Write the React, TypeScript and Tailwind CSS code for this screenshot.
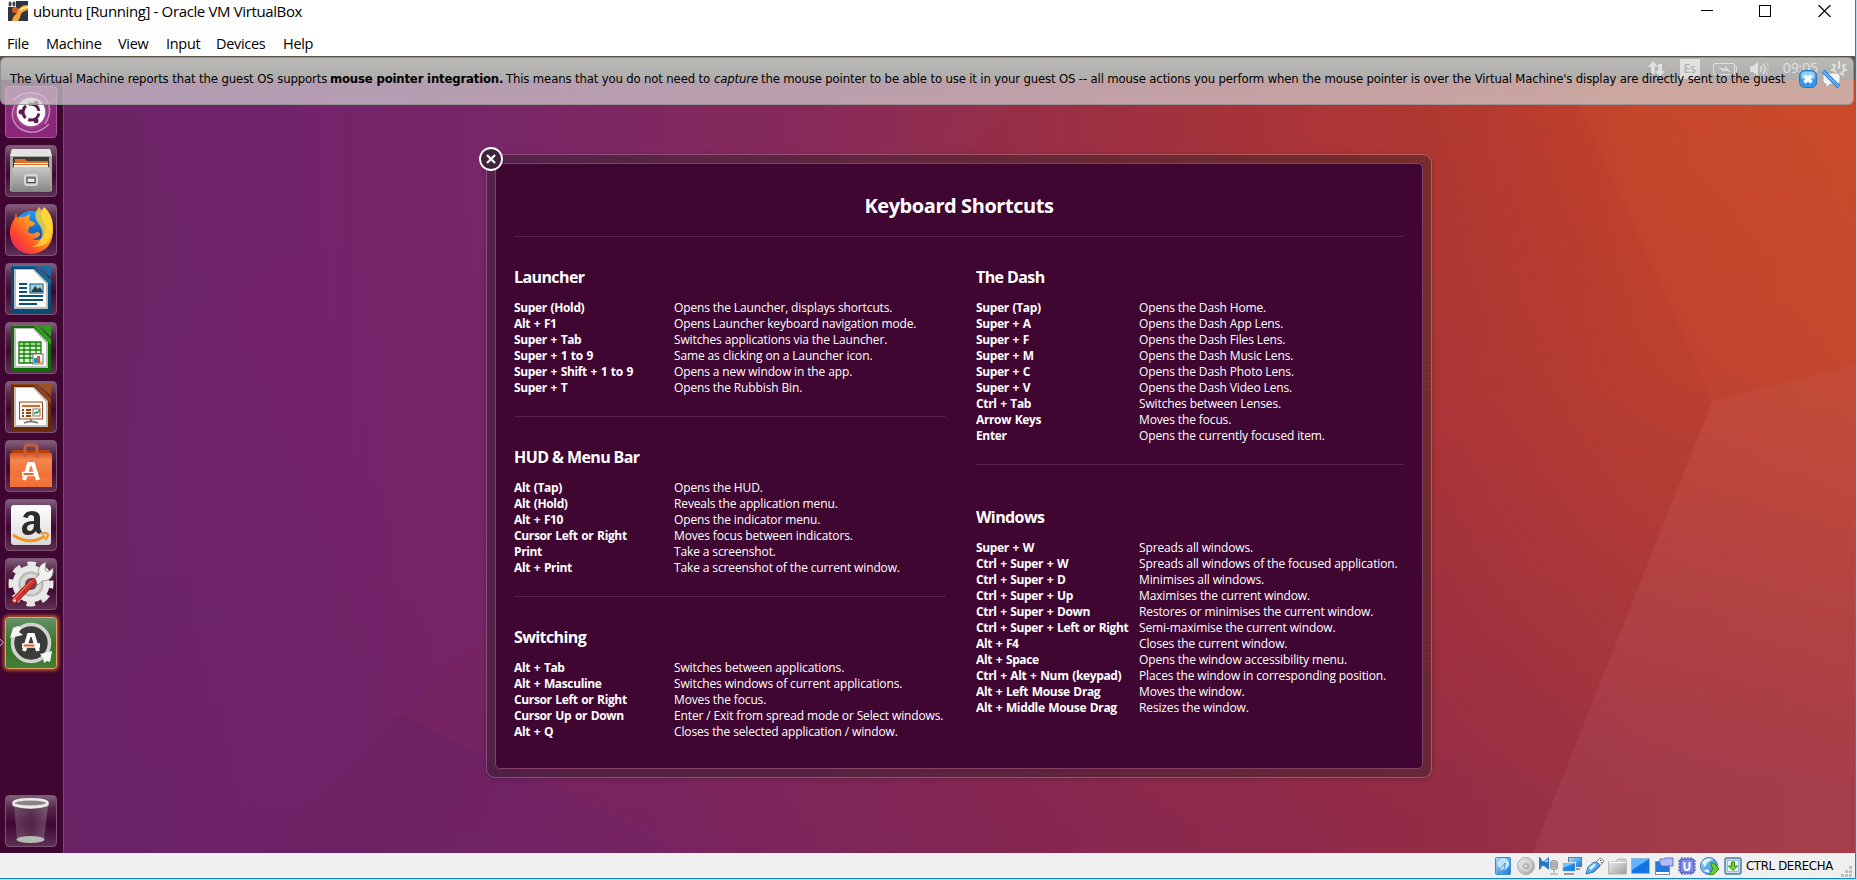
import React from "react";

type Row = [string, string];

const launcherRows: Row[] = [
  ["Super (Hold)", "Opens the Launcher, displays shortcuts."],
  ["Alt + F1", "Opens Launcher keyboard navigation mode."],
  ["Super + Tab", "Switches applications via the Launcher."],
  ["Super + 1 to 9", "Same as clicking on a Launcher icon."],
  ["Super + Shift + 1 to 9", "Opens a new window in the app."],
  ["Super + T", "Opens the Rubbish Bin."],
];
const hudRows: Row[] = [
  ["Alt (Tap)", "Opens the HUD."],
  ["Alt (Hold)", "Reveals the application menu."],
  ["Alt + F10", "Opens the indicator menu."],
  ["Cursor Left or Right", "Moves focus between indicators."],
  ["Print", "Take a screenshot."],
  ["Alt + Print", "Take a screenshot of the current window."],
];
const switchingRows: Row[] = [
  ["Alt + Tab", "Switches between applications."],
  ["Alt + Masculine", "Switches windows of current applications."],
  ["Cursor Left or Right", "Moves the focus."],
  ["Cursor Up or Down", "Enter / Exit from spread mode or Select windows."],
  ["Alt + Q", "Closes the selected application / window."],
];
const dashRows: Row[] = [
  ["Super (Tap)", "Opens the Dash Home."],
  ["Super + A", "Opens the Dash App Lens."],
  ["Super + F", "Opens the Dash Files Lens."],
  ["Super + M", "Opens the Dash Music Lens."],
  ["Super + C", "Opens the Dash Photo Lens."],
  ["Super + V", "Opens the Dash Video Lens."],
  ["Ctrl + Tab", "Switches between Lenses."],
  ["Arrow Keys", "Moves the focus."],
  ["Enter", "Opens the currently focused item."],
];
const windowRows: Row[] = [
  ["Super + W", "Spreads all windows."],
  ["Ctrl + Super + W", "Spreads all windows of the focused application."],
  ["Ctrl + Super + D", "Minimises all windows."],
  ["Ctrl + Super + Up", "Maximises the current window."],
  ["Ctrl + Super + Down", "Restores or minimises the current window."],
  ["Ctrl + Super + Left or Right", "Semi-maximise the current window."],
  ["Alt + F4", "Closes the current window."],
  ["Alt + Space", "Opens the window accessibility menu."],
  ["Ctrl + Alt + Num (keypad)", "Places the window in corresponding position."],
  ["Alt + Left Mouse Drag", "Moves the window."],
  ["Alt + Middle Mouse Drag", "Resizes the window."],
];

function Section({ title, rows, keyWidth }: { title: string; rows: Row[]; keyWidth: string }) {
  return (
    <section className="whitespace-nowrap">
      <h2 className="h-5 text-[16px] leading-[18px] font-bold tracking-[-0.6px]">{title}</h2>
      <div className="mt-3">
        {rows.map(([k, v]) => (
          <div key={k} className="flex h-4 text-[12px] leading-4">
            <span className={`${keyWidth} shrink-0 font-bold tracking-[-0.36px] [word-spacing:0.9px]`}>{k}</span>
            <span className="tracking-[-0.13px]">{v}</span>
          </div>
        ))}
      </div>
    </section>
  );
}

function Rule({ className }: { className: string }) {
  return <div className={`h-px bg-[#571f49] ${className}`} />;
}

function Wallpaper() {
  return (
    <svg className="absolute inset-0 h-full w-full" viewBox="0 56 1857 797" preserveAspectRatio="none">
      <defs>
        <linearGradient id="wp-h" x1="0" x2="1">
          <stop offset="0" stopColor="#6a2464" />
          <stop offset="0.15" stopColor="#70246a" />
          <stop offset="0.27" stopColor="#782765" />
          <stop offset="0.42" stopColor="#862a5a" />
          <stop offset="0.53" stopColor="#942f4c" />
          <stop offset="0.65" stopColor="#a5343f" />
          <stop offset="0.78" stopColor="#b43a33" />
          <stop offset="0.88" stopColor="#c3452c" />
          <stop offset="1" stopColor="#cb4a29" />
        </linearGradient>
        <linearGradient id="wp-v" x1="0.35" y1="0.15" x2="0.5" y2="1">
          <stop offset="0" stopColor="#6e1f6c" stopOpacity="0" />
          <stop offset="0.4" stopColor="#6e1f6c" stopOpacity="0.09" />
          <stop offset="1" stopColor="#6c1f66" stopOpacity="0.44" />
        </linearGradient>
        <linearGradient id="wp-low" x1="0" y1="0" x2="0.8" y2="1">
          <stop offset="0" stopColor="#5a1850" stopOpacity="0.26" />
          <stop offset="1" stopColor="#5a1850" stopOpacity="0.05" />
        </linearGradient>
        <linearGradient id="wp-mid" x1="0" x2="1">
          <stop offset="0" stopColor="#7a2070" stopOpacity="0.22" />
          <stop offset="1" stopColor="#7a2070" stopOpacity="0" />
        </linearGradient>
      </defs>
      <rect y="56" width="1857" height="797" fill="url(#wp-h)" />
      <rect y="56" width="1857" height="797" fill="url(#wp-v)" />
      <polygon points="115,56 400,715 1012,56" fill="url(#wp-mid)" />
      <polygon points="265,853 400,715 690,853" fill="url(#wp-low)" />
      <polygon points="1012,107 1060,56 1565,56 1581,107 1714,401 1534,853 700,853 400,715" fill="#a01818" opacity="0.05" />
      <polygon points="1714,401 1857,365 1857,853 1534,853" fill="#ffb0b0" opacity="0.06" />
      <polygon points="1565,56 1857,56 1857,365 1714,401" fill="#ff7a20" opacity="0.03" />
    </svg>
  );
}

function Tile({ children, className = "border-[#7d5273] bg-[linear-gradient(#835f7b_0px,#56264a_12px,#400632_28px,#47103a_34px,#5e3053_100%)]" }: { children: React.ReactNode; className?: string }) {
  return (
    <div className={`h-[52px] w-[52px] shrink-0 overflow-hidden rounded-[4px] border ${className}`}>
      <svg viewBox="1 1 50 50" className="block h-full w-full">
        {children}
      </svg>
    </div>
  );
}

function Doc({ dark, light, fold }: { dark: string; light: string; fold: string }) {
  return (
    <>
      <path d="M7 3h25l14 14v32q0 1-1 1H8q-2 0-2-2V5q0-2 1-2z" fill={dark} />
      <path d="M7 3h25l14 14v6L29 4H7z" fill={light} />
      <path d="M9 6h20l14 14v26H9z" fill="#bdbfbe" />
      <path d="M11 7h17l13 14v23H11z" fill="#fff" />
      <path d="M34 3h12v12z" fill={fold} />
    </>
  );
}

function LauncherIcons() {
  return (
    <>
      <Tile className="border-[#a05c97] bg-[#8f2b7d]">
        <defs>
          <radialGradient id="dash-bg">
            <stop offset="0.4" stopColor="#b873ac" />
            <stop offset="1" stopColor="#8f2b7d" />
          </radialGradient>
        </defs>
        <rect width="52" height="52" fill="#8c2679" />
        <circle cx="26" cy="26" r="19" fill="url(#dash-bg)" />
        <path d="M8 14q14-12 30-4 12 12 2 28M44 38q-14 14-30 4-11-10-4-24" fill="none" stroke="#c48abb" strokeWidth="1.5" />
        <circle cx="26" cy="26" r="14.3" fill="#fff" />
        <circle cx="26" cy="26" r="8" fill="none" stroke="#5e1a50" strokeWidth="3" strokeDasharray="13.75 3" strokeDashoffset="-1.5" />
        <circle cx="16" cy="26" r="2.5" fill="#5e1a50" />
        <circle cx="31" cy="17.2" r="2.5" fill="#5e1a50" />
        <circle cx="31" cy="34.8" r="2.5" fill="#5e1a50" />
      </Tile>
      <Tile>
        <defs>
          <linearGradient id="cab" x2="0" y2="1">
            <stop stopColor="#c8c8c6" />
            <stop offset="1" stopColor="#858583" />
          </linearGradient>
        </defs>
        <path d="M7 4h38l2 7v35H5V11z" fill="#aaa9a7" />
        <path d="M7 4h38l2 7H5z" fill="#e4e4e2" />
        <path d="M8 12h36v12H8z" fill="#403a38" />
        <path d="M10 14h10l2 2h21v9H9z" fill="#d86f2b" />
        <path d="M9 18h34v1H9zM9 20h34v2H9z" fill="#fff0de" />
        <path d="M10 22h33v3H10z" fill="#e88b49" />
        <path d="M7 23l2-1h34l2 1 1 24H6z" fill="url(#cab)" />
        <rect x="20" y="30" width="12" height="10" rx="2" fill="#a8a8a6" stroke="#d6d6d4" strokeWidth="2" />
        <rect x="22" y="33" width="8" height="4.500" fill="#e8e8e6" stroke="#444" />
      </Tile>
      <Tile>
        <defs>
          <linearGradient id="ff-a" x1="1" x2="0" y2="1">
            <stop stopColor="#fff04a" />
            <stop offset="0.4" stopColor="#ffa41f" />
            <stop offset="0.7" stopColor="#ff4a2b" />
            <stop offset="1" stopColor="#e3156a" />
          </linearGradient>
          <linearGradient id="ff-b" x2="0" y2="1">
            <stop stopColor="#1f9bf5" />
            <stop offset="1" stopColor="#103b9e" />
          </linearGradient>
        </defs>
        <circle cx="27" cy="26" r="19" fill="url(#ff-b)" />
        <path d="M11 8l1 6q3-2 7-1l6-3-1 6 6 3q1 2-6 4l-1 5q4 3 9 0 3 0 3 3-3 4-8 4 7 3 12-3 4-8-1-15-4-8 1-14c6 5 9 12 9 21q1 23-21 26-19-1-22-19-1-9 5-17z" fill="url(#ff-a)" />
        <path d="M34 3q-7 8-1 16 7 8 3 16-3 7-10 8 20 1 21-18Q48 12 40 10z" fill="#ffd937" opacity=".8" />
      </Tile>
      <Tile>
        <Doc dark="#0a4b77" light="#12699a" fold="#1c6a9e" />
        <path d="M14 21h8M14 25h8M14 29h8M14 33h24M14 37h24M14 41h18" stroke="#0b517f" strokeWidth="2" />
        <rect x="25" y="21" width="13" height="9" fill="#9fd4ec" stroke="#0b517f" />
        <path d="M26 29l4-6 3 3 2-2 3 5z" fill="#293c46" />
        <circle cx="36" cy="23" r="1.2" fill="#f1c84a" />
      </Tile>
      <Tile>
        <Doc dark="#116a08" light="#2ca01d" fold="#2b9d20" />
        <path d="M14 20h22v21H14z" fill="#dff5d9" />
        <path d="M14 20h22v4H14z" fill="#97d886" />
        <path d="M14 20h22v21H14zM19 20v21M25 20v21M31 20v21M14 24h22M14 28h22M14 32h22M14 36h22" fill="none" stroke="#168109" strokeWidth="1.3" />
        <rect x="28" y="32" width="10" height="10" fill="#fff" stroke="#74736f" />
        <path d="M29 36h3v5h-3z" fill="#2786cc" />
        <path d="M32 34h3v7h-3z" fill="#dd5620" />
        <path d="M35 39h2v2h-2z" fill="#f2c700" />
      </Tile>
      <Tile>
        <Doc dark="#6b2b08" light="#944417" fold="#9e541f" />
        <rect x="14.5" y="21" width="23" height="17" fill="#fff7f0" stroke="#a34613" />
        <path d="M17 25h18" stroke="#d36b30" strokeWidth="2" />
        <path d="M17 29h2M17 32h2M17 35h2M21 29h5M21 32h5M21 35h5" stroke="#974118" strokeWidth="2" />
        <rect x="28" y="28" width="7" height="7" fill="#fff" stroke="#777" />
        <path d="M29 33l2-2 1 1 3-3" fill="none" stroke="#25942a" strokeWidth="1.4" />
        <path d="M26 38v3M19 42q7-3 14 0" fill="none" stroke="#7a7774" strokeWidth="1.8" />
      </Tile>
      <Tile>
        <defs>
          <linearGradient id="bag" x2="0" y2="1">
            <stop stopColor="#d9541f" />
            <stop offset="0.2" stopColor="#f4854d" />
            <stop offset="1" stopColor="#ea6328" />
          </linearGradient>
        </defs>
        <path d="M7 10h38v4H7z" fill="#b6410f" />
        <path d="M5 13h42v34H5z" fill="url(#bag)" />
        <path d="M20 17V8q0-3 3-3h6q3 0 3 3v9" fill="none" stroke="#c2603e" strokeWidth="3" />
        <path d="M5 37h42v10H5z" fill="#ff8a4d" opacity=".35" />
        <path d="M19 40l5-16h4l5 16" fill="none" stroke="#fff" strokeWidth="4" />
        <path d="M17 34h16" stroke="#fff" strokeWidth="4.500" />
        <path d="M18.500 34h10" stroke="#e8672c" strokeWidth="2" />
      </Tile>
      <Tile>
        <defs>
          <linearGradient id="amz" x2="0" y2="1">
            <stop stopColor="#fff" />
            <stop offset="1" stopColor="#dadada" />
          </linearGradient>
        </defs>
        <rect x="6" y="6" width="40" height="40" rx="3" fill="url(#amz)" />
        <path d="M18 18q2-6 9-6 8 0 8 7v9q0 3 2 5l-3 2q-3-1-3-3-3 4-8 4-6 0-6-6 0-8 12-8v-3q0-3-3-3t-3 3zM29 25q-7 0-7 4 0 3 3 3 4 0 4-7z" fill="#2d2c2b" />
        <path d="M8 36q17 11 32 1" fill="none" stroke="#f69319" strokeWidth="2.800" />
        <path d="M36 35q5-2 7 0 0 4-3 6" fill="none" stroke="#f69319" strokeWidth="2" />
      </Tile>
      <Tile>
        <circle cx="26" cy="26" r="14" fill="#d4d4d1" stroke="#e9e9e7" strokeWidth="9" />
        <circle cx="26" cy="26" r="19.500" fill="none" stroke="#e6e6e4" strokeWidth="6" strokeDasharray="8.300 7.020" strokeDashoffset="4.150" />
        <circle cx="26" cy="26" r="11.500" fill="#d9d9d6" stroke="#bdbdba" strokeWidth="2.500" />
        <circle cx="26" cy="26" r="6" fill="#6c4562" />
        <path d="M29 21l5-4q-2-7 3-11l4-2-1 8 3 2 5-4q1 9-5 12l-6 1-4 4z" fill="#f2f2f0" stroke="#8a8a88" strokeWidth=".8" />
        <path d="M9.500 42.500L28 23.500" stroke="#8e1c16" strokeWidth="6.600" strokeLinecap="round" />
        <path d="M9.500 42.500L28 23.500" stroke="#d0342c" strokeWidth="5" strokeLinecap="round" />
        <path d="M9 40.800L26 23.200" stroke="#ed7068" strokeWidth="1.2" strokeLinecap="round" />
        <circle cx="9.500" cy="42.500" r="1.2" fill="#fff" />
      </Tile>
      <Tile className="border-[#e9a06a] bg-[#3d7a30] shadow-[0_0_3px_1.5px_#a84c2c]">
        <defs>
          <linearGradient id="upd" x2="0" y2="1">
            <stop stopColor="#6b916b" />
            <stop offset="0.5" stopColor="#33762a" />
            <stop offset="1" stopColor="#417f35" />
          </linearGradient>
        </defs>
        <rect width="52" height="52" fill="url(#upd)" />
        <circle cx="26" cy="26" r="18.5" fill="#3b3b39" stroke="#d2d2d0" strokeWidth="3.600" />
        <path d="M8 11l-3 10 13-3-4-3 2-4-3-2z" fill="#f6f6f4" />
        <path d="M35 37l12-3-2 11-3-1-3 2-1-5z" fill="#f6f6f4" />
        <path d="M19 34l5-16h4l5 16" fill="none" stroke="#fff" strokeWidth="4" />
        <path d="M17 28.500h18" stroke="#fff" strokeWidth="4.500" />
        <path d="M18.500 28.500h11" stroke="#e95a1c" strokeWidth="2" />
      </Tile>
    </>
  );
}

function StatusIcons() {
  const c = "block h-[18px] w-5 shrink-0";
  return (
    <div className="flex gap-[3px]">
      <svg className={c} viewBox="0 0 20 18">
        <defs>
          <linearGradient id="st-b" x2="1" y2="1">
            <stop stopColor="#a9dcff" />
            <stop offset="1" stopColor="#1478e4" />
          </linearGradient>
          <linearGradient id="st-g" x2="1" y2="1">
            <stop stopColor="#f2f2f2" />
            <stop offset="1" stopColor="#9c9c9c" />
          </linearGradient>
        </defs>
        <rect x="2.5" y=".5" width="15" height="17" rx="1" fill="url(#st-b)" stroke="#3c8bd0" />
        <circle cx="10.500" cy="7" r="5" fill="#b7dfff" stroke="#e8f5ff" />
        <path d="M5 16l7-10-1 6z" fill="#fff" stroke="#3279bd" strokeWidth=".8" />
      </svg>
      <svg className={c} viewBox="0 0 20 18">
        <circle cx="10" cy="9" r="8.5" fill="url(#st-g)" stroke="#b0b0b0" />
        <circle cx="10" cy="9" r="5" fill="none" stroke="#e8e8e8" />
        <circle cx="10" cy="9" r="2" fill="#eee" stroke="#999" />
      </svg>
      <svg className={c} viewBox="0 0 20 18">
        <path d="M0 0q2 0 3 4h2l5-4v13l-5-4H3q-1 3-3 4z" fill="#247ac8" />
        <path d="M5 5l4-3v3z" fill="#9fd5ff" />
        <rect x="11.500" y="3.500" width="7" height="9" rx="2.500" fill="#c7c7c7" stroke="#999" />
        <path d="M12 6h6M12 8h6M12 10h6M15 12v4M11 17h8" stroke="#999" />
      </svg>
      <svg className={c} viewBox="0 0 20 18">
        <rect x="6.500" y=".5" width="13" height="9" fill="url(#st-b)" stroke="#657b94" />
        <path d="M14 12h4" stroke="#999" strokeWidth="2" />
        <rect x=".5" y="5.500" width="13" height="9" fill="#2585e6" stroke="#dce9f5" />
        <path d="M1 6h12L1 11z" fill="#7cc0fb" />
        <path d="M2 17h10" stroke="#999" strokeWidth="2" />
      </svg>
      <svg className={c} viewBox="0 0 20 18">
        <path d="M11 5l4-4 4 3-4 5z" fill="#eee" stroke="#888" />
        <path d="M15 3l1 1M17 5l-1 1" stroke="#555" />
        <path d="M1 17l2-7 6-5q5 0 6 4l-6 6z" fill="url(#st-b)" stroke="#2b77bb" />
        <path d="M4 11l5-4 2 1-5 5z" fill="#dff3ff" />
      </svg>
      <svg className={c} viewBox="0 0 20 18">
        <path d="M.5 17V5h7l2-3h8l1 3v12z" fill="url(#st-g)" stroke="#b5b5b5" />
        <path d="M1 5.500h17" stroke="#fff" />
      </svg>
      <svg className={c} viewBox="0 0 20 18">
        <rect x=".5" y="1.500" width="18" height="15" fill="#1173e6" stroke="#8fb8dc" />
        <path d="M1 2h17L1 13z" fill="#63b3ff" />
      </svg>
      <svg className={c} viewBox="0 0 20 18">
        <rect x="1.500" y="4.500" width="14" height="13" fill="#fff" stroke="#7b8fa7" />
        <path d="M2 5h13v10H2z" fill="#247ae0" />
        <path d="M6 2h4l1-1h8v8H8L6 7z" fill="#b3bbfa" stroke="#6670c6" />
      </svg>
      <svg className={c} viewBox="0 0 20 18">
        <path d="M5 0v18M8 0v18M11 0v18M14 0v18M1 4h18M1 7h18M1 10h18M1 13h18" stroke="#4450af" />
        <rect x="3" y="2" width="14" height="14" rx="1" fill="#7a89ea" stroke="#4450af" />
        <path d="M7.500 5v5q0 3 2.500 3t2.500-3V5" fill="none" stroke="#fff" strokeWidth="2" />
      </svg>
      <svg className={c} viewBox="0 0 20 18">
        <circle cx="9" cy="9" r="8.500" fill="url(#st-b)" stroke="#3c82b8" />
        <path d="M2 5q5-5 10-3-2 3-5 3l-2 5zM3 14l5-2 2 4z" fill="#eef8ff" />
        <path d="M10 6h4l5 6-6 6H9l4-6z" fill="#6dcc27" stroke="#2d8a16" />
      </svg>
      <svg className={c} viewBox="0 0 20 18">
        <rect x="2" y="1" width="16" height="16" rx="2" fill="#c9dcec" stroke="#4f7da4" strokeWidth="1.500" />
        <rect x="4.500" y="3.500" width="11" height="11" fill="#eaf3fa" stroke="#a3bed4" />
        <path d="M8.500 5h3v4h3L10 13.500 5.500 9h3z" fill="#72d824" stroke="#32861b" />
      </svg>
    </div>
  );
}

export default function App() {
  return (
    <div className="flex h-[880px] w-[1857px] overflow-hidden bg-white font-['Open_Sans','Noto_Sans',sans-serif] text-black">
      <div className="flex min-w-0 flex-1 flex-col">
        <header className="flex h-6 shrink-0 items-center bg-white pl-2">
          <svg className="-mt-0.5 h-5 w-5" viewBox="0 0 20 20">
            <rect width="20" height="20" fill="#303640" />
            <path d="M4 11q4-1 6-3l3-2q2-2 7-2v5q-5 1-7 4-1 5-3 7H4q1-5 5-8z" fill="#f8a13b" />
            <path d="M12 8q3-3 8-3v2q-5 1-8 3z" fill="#ffe18c" />
            <circle cx="7" cy="9" r="3" fill="#dd5a1f" />
            <rect width="8" height="6" fill="#fff" />
            <path d="M1 1h2v4H1zM5 1h2v4H5zM1 3h6" fill="#444" stroke="#444" strokeWidth=".6" />
          </svg>
          <span className="-mt-0.5 ml-[5px] text-[15px] leading-6 whitespace-nowrap tracking-[-0.37px]">ubuntu [Running] - Oracle VM VirtualBox</span>
          <svg className="-mt-0.5 mr-[24px] ml-auto h-3 w-[130px]" viewBox="0 0 130 12" fill="none" stroke="#000" shapeRendering="crispEdges">
            <path d="M0 5.500h12" />
            <rect x="58.500" y=".5" width="11" height="11" />
            <path d="M117.500 0l12 12M129.500 0l-12 12" strokeWidth="1.200" shapeRendering="auto" />
          </svg>
        </header>
        <nav className="flex h-8 shrink-0 bg-white pl-[7px] text-[14.500px] leading-10 tracking-[-0.3px]">
          <span className="w-[39px]">File</span>
          <span className="w-[72px]">Machine</span>
          <span className="w-[48px]">View</span>
          <span className="w-[50px]">Input</span>
          <span className="w-[67px]">Devices</span>
          <span>Help</span>
        </nav>

        <main className="relative flex min-h-0 flex-1 flex-col">
          <Wallpaper />
          <div className="relative flex h-6 shrink-0 items-center justify-end gap-[13px] border-t border-[#58554b] bg-[#5b5850] pr-2 text-white">
            <svg className="h-4 w-[17px]" viewBox="0 0 17 16" fill="#fff">
              <path d="M5 0l5 6H7v7H3V6H0zM12 16l-5-6h3V3h4v7h3z" />
            </svg>
            <span className="ml-0.5 flex h-5 w-5 items-center justify-center bg-white text-[12px] font-semibold text-[#55524b]">Es</span>
            <svg className="h-3 w-6" viewBox="0 0 24 12" fill="none" stroke="#fff">
              <rect x=".5" y=".5" width="21" height="11" rx="1.500" />
              <path d="M22.500 3.500h1v5h-1" />
              <path d="M5 4l7 2v-3l6 6-7-2v2z" fill="#fff" stroke="none" />
            </svg>
            <svg className="h-4 w-5" viewBox="0 0 20 16" fill="none" stroke="#fff" strokeWidth="1.500">
              <path d="M0 5h3l5-4v14l-5-4H0z" fill="#fff" stroke="none" />
              <path d="M10.500 5q2 3 0 6M13 3q4 5 0 10" />
              <path d="M16 1q4 7 0 14" opacity=".4" />
            </svg>
            <span className="-mt-px text-[14px] leading-5 tracking-[-0.1px]">09:05</span>
            <svg className="h-4 w-4" viewBox="0 0 16 16" fill="none" stroke="#fff" strokeWidth="2">
              <path d="M5 4a5 5 0 1 0 6 0M8 0v8M1.500 3l2 2M14.500 3l-2 2M0 9h3M13 9h3M3 14.500l2-2M13 14.500l-2-2" />
            </svg>
          </div>

          <div className="relative flex min-h-0 flex-1">
            <aside className="flex w-16 shrink-0 flex-col justify-between border-r border-[#7e4676] bg-[#400632] pt-1.5 pb-1.5 pl-[5px]">
              <div className="relative flex flex-col gap-[7px]">
                <LauncherIcons />
                <svg className="absolute top-[552px] -left-[5px] h-[9px] w-[5px]" viewBox="0 0 5 9" fill="none" stroke="#9cc8e8">
                  <path d="M0 1l3 3.500-3 3.500" />
                </svg>
              </div>
              <Tile>
                <defs>
                  <linearGradient id="bin" x2="1">
                    <stop stopColor="#a995a7" stopOpacity=".35" />
                    <stop offset=".5" stopColor="#7c5b79" stopOpacity=".3" />
                    <stop offset="1" stopColor="#b9a5b7" stopOpacity=".4" />
                  </linearGradient>
                </defs>
                <path d="M9 10h34l-4 34q-13 5-27 0z" fill="url(#bin)" />
                <ellipse cx="25.500" cy="44.500" rx="14" ry="3.500" fill="#b4bab4" />
                <path d="M7.500 8v3q18 6 36 0V8" fill="#c9ccc8" />
                <ellipse cx="25.500" cy="8" rx="17" ry="3.800" fill="#8a8487" stroke="#eaece8" strokeWidth="2.500" />
              </Tile>
            </aside>

            <div className="relative mt-[74px] ml-[422px] h-[624px] w-[946px] rounded-[9px] border border-white/20 bg-[#1c1c1c]/40 bg-[radial-gradient(circle,rgba(255,255,255,0.07)_0.5px,transparent_0.8px)] bg-[size:4px_4px] bg-clip-padding p-2 shadow-[0_1px_5px_rgba(0,0,0,0.25)]">
              <div className="h-full rounded-[5px] border border-[#873f65] bg-[#400632] px-[18px] text-white">
                <h1 className="h-[73px] border-b border-[#571f49] pt-[30px] text-center text-[20px] leading-6 font-bold tracking-[-0.43px]">Keyboard Shortcuts</h1>
                <div className="flex justify-between pt-[31px]">
                  <div className="w-[432px]">
                    <Section title="Launcher" rows={launcherRows} keyWidth="w-[160px]" />
                    <Rule className="mt-5 mb-[31px]" />
                    <Section title={"HUD & Menu Bar"} rows={hudRows} keyWidth="w-[160px]" />
                    <Rule className="mt-5 mb-[31px]" />
                    <Section title="Switching" rows={switchingRows} keyWidth="w-[160px]" />
                  </div>
                  <div className="w-[428px]">
                    <Section title="The Dash" rows={dashRows} keyWidth="w-[163px]" />
                    <Rule className="mt-5 mb-[43px]" />
                    <Section title="Windows" rows={windowRows} keyWidth="w-[163px]" />
                  </div>
                </div>
              </div>
              <svg className="absolute -top-2 -left-2 h-6 w-6" viewBox="0 0 24 24" fill="#40243b" stroke="#fff">
                <circle cx="12" cy="12" r="11" strokeWidth="1.800" />
                <path d="M8 8l8 8M16 8l-8 8" strokeWidth="2.200" />
              </svg>
            </div>
          </div>

          <div className="absolute top-px left-0 flex h-12 w-[1854px] items-center rounded-[6px] border border-[#8b8b89]/80 bg-[linear-gradient(rgba(218,218,218,0.75),rgba(204,204,204,0.72)_55%,rgba(209,205,207,0.72))] pb-1 pl-[9px] font-['DejaVu_Sans_Condensed','DejaVu_Sans',sans-serif] text-[13px] whitespace-nowrap">
            <span className="w-[320px] tracking-[-0.12px]">The Virtual Machine reports that the guest OS supports</span>
            <b className="w-[176px] tracking-[-0.18px]">mouse pointer integration.</b>
            <span className="w-[208px] tracking-[-0.15px]">This means that you do not need to</span>
            <i className="w-[47px] tracking-[-0.15px]">capture</i>
            <span className="w-[1038px] tracking-[-0.155px]">the mouse pointer to be able to use it in your guest OS -- all mouse actions you perform when the mouse pointer is over the Virtual Machine's display are directly sent to the guest</span>
            <svg className="h-[18px] w-[18px] shrink-0" viewBox="0 0 18 18">
              <rect x=".5" y=".5" width="17" height="17" rx="5" fill="#3d97e8" stroke="#2575bf" />
              <rect x="2" y="1.500" width="14" height="8" rx="4" fill="#8fcdfc" />
              <path d="M5.500 5.500l7 7M12.500 5.500l-7 7" stroke="#fff" strokeWidth="3.500" />
            </svg>
            <svg className="ml-[5px] h-[18px] w-[18px] shrink-0" viewBox="0 0 18 18">
              <path d="M3 3h12q3 0 3 3v5q0 3-3 3H8l-4 4V14q-3 0-3-3V5z" fill="#f5f5f5" stroke="#aaa" />
              <path d="M1 1l16 16" stroke="#1d6fc0" strokeWidth="4" />
              <path d="M1 1l16 16" stroke="#63b5f5" strokeWidth="2.300" />
            </svg>
          </div>
        </main>

        <footer className="flex h-[25px] shrink-0 items-center bg-[#f0f0f0]">
          <div className="ml-[1493px]">
            <StatusIcons />
          </div>
          <span className="ml-[3px] font-['DejaVu_Sans_Condensed','DejaVu_Sans',sans-serif] text-[13px] leading-5 tracking-[-0.3px] whitespace-nowrap">CTRL DERECHA</span>
          <svg className="mr-0.5 mb-0 ml-auto h-3 w-3 self-end" viewBox="0 0 12 12" fill="#bfbfbf">
            <path d="M8 0h3v3H8zM4 4h3v3H4zM8 4h3v3H8zM0 8h3v3H0zM4 8h3v3H4zM8 8h3v3H8z" />
          </svg>
        </footer>
        <div className="h-px shrink-0 bg-[#1581da]" />
        <div className="h-px shrink-0 bg-[#d4dae0]" />
      </div>
      <div className="h-[879px] w-px bg-[#1581da]" />
      <div className="w-px bg-[#bcd8ee]" />
    </div>
  );
}
